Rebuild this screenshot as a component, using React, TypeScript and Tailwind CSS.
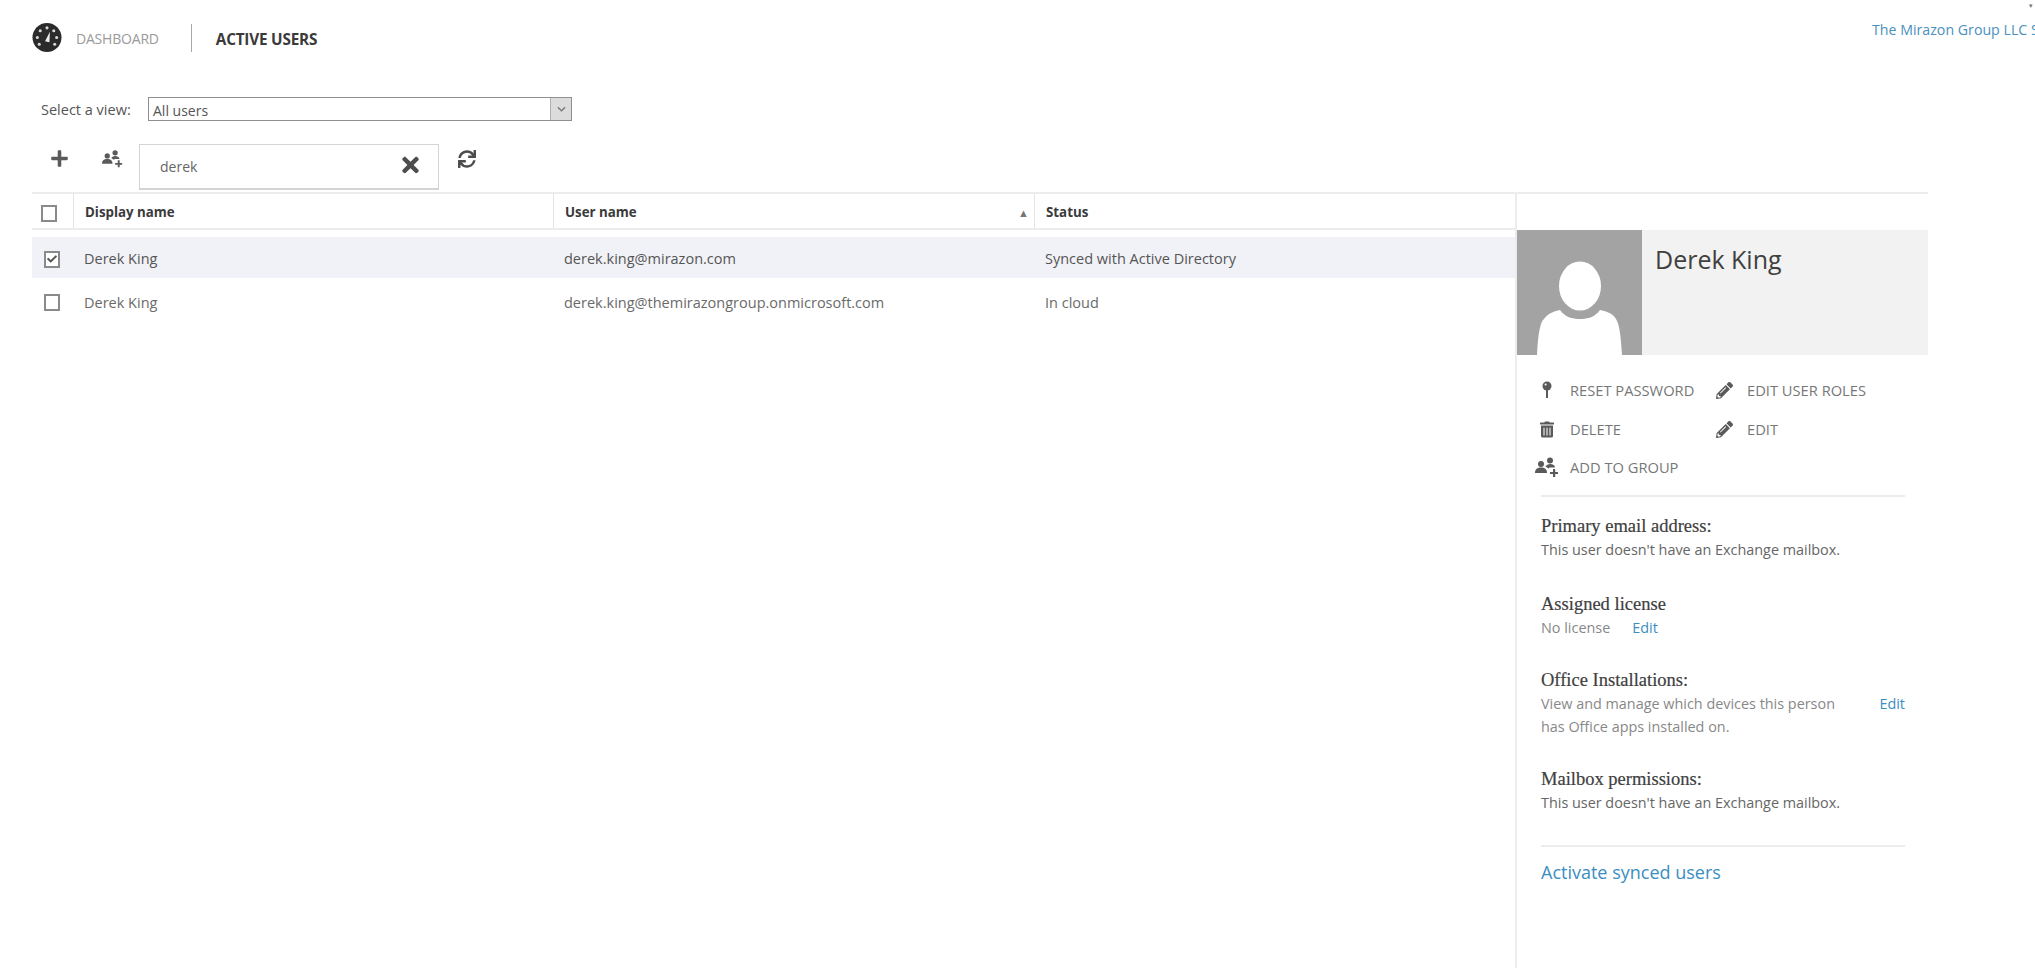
import React from "react";
import { FaPlus, FaTimes, FaSync, FaPencilAlt, FaTrashAlt, FaCheck } from "react-icons/fa";

function Gauge() {
  return (
    <svg viewBox="0 0 30 30" className="w-[30px] h-[29px]">
      <circle cx="15" cy="15" r="15" fill="#2b2b2b" />
      <g fill="#d9d9d9">
        <circle cx="15" cy="5" r="1.6" />
        <circle cx="8" cy="8" r="1.6" />
        <circle cx="22" cy="8" r="1.6" />
        <circle cx="5" cy="15" r="1.6" />
        <circle cx="25" cy="15" r="1.6" />
        <circle cx="7" cy="22" r="1.6" />
        <circle cx="23" cy="22" r="1.6" />
      </g>
      <path d="M13 19 L18 9 L17.5 20 Z" fill="#ededed" />
    </svg>
  );
}

function AddGroup({ className }: { className: string }) {
  return (
    <svg viewBox="0 0 24 20" className={className} fill="#5a5a5a">
      <circle cx="6" cy="7" r="3" />
      <path d="M0 16c0-4 2.500-5.500 6-5.500s6 1.500 6 5.500z" />
      <circle cx="15" cy="3.500" r="3" />
      <path d="M10.500 9.500c1-1.600 2.800-2.500 4.500-2.500 3 0 5 1.500 5 3.500h-4.500c-.8-.2-1.500 0-2 1z" />
      <path d="M18 12h2.200v3H23v2h-2.800v3H18v-3h-3v-2h3z" />
    </svg>
  );
}

function Key() {
  return (
    <svg viewBox="0 0 10 18" className="w-[10px] h-[18px]" fill="#5a5a5a">
      <circle cx="5" cy="5" r="4.500" />
      <rect x="4" y="8" width="2" height="9" />
      <circle cx="3.600" cy="3.600" r="1" fill="#ffffff" />
    </svg>
  );
}

function Avatar() {
  return (
    <svg viewBox="0 0 125 125" className="w-[125px] h-[125px] shrink-0 block">
      <rect width="125" height="125" fill="#a3a3a3" />
      <ellipse cx="63" cy="56" rx="21" ry="24.500" fill="#ffffff" />
      <path d="M20 125 C21 105 23 92 27 89 C31 83 38 81 43 80 C48 87 55 89 63 89 C71 89 78 87 83 80 C88 81 96 83 99 89 C103 95 104 110 105 125 Z" fill="#ffffff" />
    </svg>
  );
}

function Box({ checked = false, className = "" }: { checked?: boolean; className?: string }) {
  return (
    <div className={`w-[16px] h-[17px] border-2 border-[#8a8a8a] bg-white flex items-center justify-center ${className}`}>
      {checked && <FaCheck className="w-[10px] h-[10px] text-[#555555]" />}
    </div>
  );
}

function Action({ icon, label, width }: { icon: React.ReactNode; label: string; width: string }) {
  return (
    <div className={`flex items-center h-[20px] ${width}`}>
      <div className="w-[30px] flex justify-center shrink-0 -ml-[8px] mr-[8px]">{icon}</div>
      <span className="text-[14.7px] text-[#777777] whitespace-nowrap">{label}</span>
    </div>
  );
}

function Info({ title, children, className = "" }: { title: string; children: React.ReactNode; className?: string }) {
  return (
    <div className={className}>
      <div className="font-['Liberation_Serif',serif] text-[18.5px] leading-[20px] text-[#404040] [-webkit-text-stroke:0.2px_#404040]">{title}</div>
      <div className="text-[14.4px] leading-[23px] mt-[2px] text-[#666666]">{children}</div>
    </div>
  );
}

export default function App() {
  return (
    <div className="w-[2035px] h-[968px] overflow-hidden bg-white font-['Open_Sans',sans-serif] flex flex-col relative">
      <div className="absolute right-0 top-[2px] w-[6px] h-[6px] text-[#777777] text-[7px] leading-none">▾</div>
      {/* Top bar */}
      <div className="flex items-start pl-[32px] pt-[23px] h-[97px] shrink-0">
        <Gauge />
        <span className="ml-[14px] mt-[6px] text-[14px] leading-[20px] text-[#9a9a9a] tracking-[-0.2px]">DASHBOARD</span>
        <div className="ml-[32px] mt-[1px] w-[1px] h-[28px] bg-[#a8a8a8]" />
        <span className="ml-[24px] mt-[6px] text-[15.3px] leading-[20px] font-bold text-[#3a3a3a] tracking-[-0.2px]">ACTIVE USERS</span>
        <div className="ml-auto mt-[-3px] w-[163px] overflow-hidden whitespace-nowrap text-[14.2px] leading-[20px] text-[#4a90c0]">
          The Mirazon Group LLC S
        </div>
      </div>

      {/* View select */}
      <div className="flex items-center pl-[41px] h-[24px] shrink-0">
        <span className="text-[14.5px] pt-[2px] text-[#555555] w-[107px]">Select a view:</span>
        <div className="w-[424px] h-[24px] border border-[#8f8f8f] flex items-center justify-between pl-[4px]">
          <span className="text-[14px] pt-[2px] text-[#555555]">All users</span>
          <div className="w-[21px] h-full bg-[#dcdcdc] border-l border-[#b0b0b0] flex items-center justify-center">
            <svg viewBox="0 0 10 6" className="w-[9px] h-[6px]" fill="none" stroke="#777777" strokeWidth="1.500">
              <path d="M1 1l4 4 4-4" />
            </svg>
          </div>
        </div>
      </div>

      {/* Toolbar */}
      <div className="flex items-start pl-[50px] mt-[23px] h-[45px] shrink-0">
        <FaPlus className="w-[19px] h-[19px] mt-[5px] text-[#5a5a5a]" />
        <AddGroup className="w-[21px] h-[19px] mt-[5px] ml-[33px]" />
        <div className="ml-[16px] w-[300px] h-[46px] border border-[#d4d4d4] border-b-2 flex items-center justify-between pl-[20px] pr-[17px]">
          <span className="text-[14px] text-[#666666]">derek</span>
          <FaTimes className="w-[21px] h-[24px] text-[#4d4d4d] -mt-[3px]" />
        </div>
        <FaSync className="w-[18px] h-[18px] mt-[6px] ml-[19px] text-[#4d4d4d]" />
      </div>

      {/* Content */}
      <div className="mt-[3px] ml-[32px] flex flex-1 min-h-0 w-[1896px]">
        {/* Table */}
        <div className="w-[1483px] shrink-0">
          <div className="grid grid-cols-[41px_480px_481px_481px] h-[38px] border-t-2 border-b-2 border-[#ececec]">
            <div className="flex items-center pl-[9px] pt-[4px]"><Box /></div>
            <div className="flex items-center pl-[11px] pt-[4px] border-l border-[#e4e4e4] text-[13.3px] font-bold text-[#3a3a3a]">Display name</div>
            <div className="flex items-center justify-between pl-[11px] pr-[5px] pt-[4px] border-l border-[#e4e4e4] text-[13.3px] font-bold text-[#3a3a3a]">
              <span>User name</span>
              <span className="text-[11px] text-[#777777]">▲</span>
            </div>
            <div className="flex items-center pl-[11px] pt-[4px] border-l border-[#e4e4e4] text-[13.3px] font-bold text-[#3a3a3a]">Status</div>
          </div>
          <div className="grid grid-cols-[41px_480px_481px_481px] h-[41px] mt-[7px] pt-[3px] bg-[#f1f2f7] items-center text-[14.5px] text-[#555555]">
            <div className="pl-[12px]"><Box checked /></div>
            <div className="pl-[11px]">Derek King</div>
            <div className="pl-[11px]">derek.king@mirazon.com</div>
            <div className="pl-[11px]">Synced with Active Directory</div>
          </div>
          <div className="grid grid-cols-[41px_480px_481px_481px] h-[41px] mt-[4px] items-center text-[14.5px] text-[#6a6a6a]">
            <div className="pl-[12px]"><Box /></div>
            <div className="pl-[11px]">Derek King</div>
            <div className="pl-[11px]">derek.king@themirazongroup.onmicrosoft.com</div>
            <div className="pl-[11px]">In cloud</div>
          </div>
        </div>

        {/* Detail panel */}
        <div className="w-[413px] shrink-0 border-l-2 border-[#ececec] border-t-2 h-full">
          <div className="h-[36px]" />
          <div className="flex h-[125px] bg-[#f2f2f2]">
            <Avatar />
            <div className="pl-[13px] pt-[12px] text-[25px] leading-[34px] text-[#404040]">Derek King</div>
          </div>
          <div className="pl-[23px] pt-[25px]">
            <div className="flex">
              <Action width="w-[177px]" icon={<Key />} label="RESET PASSWORD" />
              <Action width="" icon={<FaPencilAlt className="w-[17px] h-[17px] text-[#5a5a5a]" />} label="EDIT USER ROLES" />
            </div>
            <div className="flex mt-[19px]">
              <Action width="w-[177px]" icon={<FaTrashAlt className="w-[14px] h-[17px] text-[#5a5a5a]" />} label="DELETE" />
              <Action width="" icon={<FaPencilAlt className="w-[17px] h-[17px] text-[#5a5a5a]" />} label="EDIT" />
            </div>
            <div className="flex mt-[18px]">
              <Action width="w-[177px]" icon={<AddGroup className="w-[24px] h-[20px]" />} label="ADD TO GROUP" />
            </div>
          </div>
          <div className="ml-[24px] w-[364px] mt-[18px] border-t-2 border-[#ececec]" />
          <div className="ml-[24px] w-[364px] pt-[19px]">
            <Info title="Primary email address:">This user doesn't have an Exchange mailbox.</Info>
            <Info title="Assigned license" className="mt-[33px]">
              <span className="text-[#888888]">No license</span>
              <span className="ml-[22px] text-[#3a8ec2]">Edit</span>
            </Info>
            <Info title="Office Installations:" className="mt-[31px]">
              <div className="flex justify-between text-[#888888]">
                <span>View and manage which devices this person</span>
                <span className="text-[#3a8ec2]">Edit</span>
              </div>
              <div className="text-[#888888]">has Office apps installed on.</div>
            </Info>
            <Info title="Mailbox permissions:" className="mt-[31px]">This user doesn't have an Exchange mailbox.</Info>
            <div className="mt-[31px] border-t-2 border-[#ececec]" />
            <div className="mt-[12px] text-[18px] leading-[26px] text-[#3a8ec2]">Activate synced users</div>
          </div>
        </div>
      </div>
    </div>
  );
}
